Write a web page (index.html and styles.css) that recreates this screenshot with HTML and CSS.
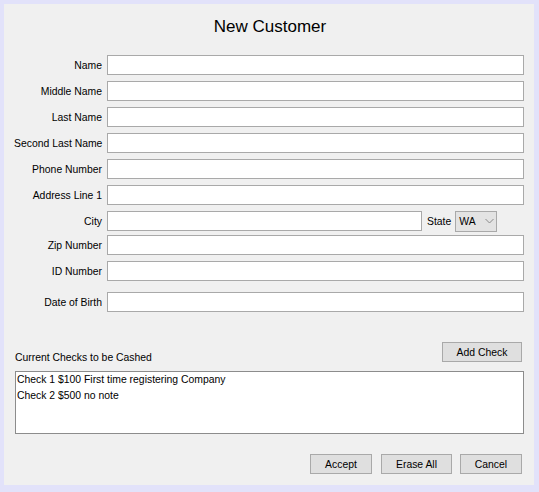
FILE: index.html
```html
<!DOCTYPE html>
<html>
<head>
<meta charset="utf-8">
<link rel="stylesheet" href="styles.css">
</head>
<body>
<div class="panel">
  <div class="title">New Customer</div>
  <div class="form">
    <div class="row"><label class="lbl">Name</label><div class="field"></div></div>
    <div class="row"><label class="lbl">Middle Name</label><div class="field"></div></div>
    <div class="row"><label class="lbl">Last Name</label><div class="field"></div></div>
    <div class="row"><label class="lbl">Second Last Name</label><div class="field"></div></div>
    <div class="row"><label class="lbl">Phone Number</label><div class="field"></div></div>
    <div class="row"><label class="lbl">Address Line 1</label><div class="field"></div></div>
    <div class="row">
      <label class="lbl">City</label>
      <div class="field city"></div>
      <span class="state-lbl">State</span>
      <div class="combo"><span>WA</span><svg class="chev" width="9" height="6" viewBox="0 0 9 6"><polyline points="0.5,1 4.5,5 8.5,1" fill="none" stroke="#8a8a8a" stroke-width="1"/></svg></div>
    </div>
    <div class="row row-zip"><label class="lbl">Zip Number</label><div class="field"></div></div>
    <div class="row"><label class="lbl">ID Number</label><div class="field"></div></div>
    <div class="row row-dob"><label class="lbl">Date of Birth</label><div class="field"></div></div>
  </div>
  <div class="checks-head">
    <span class="checks-lbl">Current Checks to be Cashed</span>
    <button class="btn btn-add">Add Check</button>
  </div>
  <div class="list">
    <div class="item">Check 1 $100 First time registering Company</div>
    <div class="item">Check 2 $500 no note</div>
  </div>
  <div class="actions">
    <button class="btn btn-accept">Accept</button>
    <button class="btn btn-erase">Erase All</button>
    <button class="btn btn-cancel">Cancel</button>
  </div>
</div>
</body>
</html>
```
FILE: styles.css
```css
html, body {
  margin: 0;
  padding: 0;
}
body {
  background: #e2e2fa;
  width: 539px;
  height: 492px;
  font-family: "Liberation Sans", Arial, sans-serif;
  font-size: 10.4px;
  color: #000;
}
.panel {
  margin: 4px 5px 0 4px;
  height: 481px;
  background: #f0f0f0;
  padding: 0 10px 0 10px;
  box-sizing: border-box;
  display: flex;
  flex-direction: column;
}
.title {
  font-size: 17px;
  line-height: 20px;
  text-align: center;
  margin-top: 13px;
  height: 20px;
  padding-left: 2px;
}
.form {
  margin-top: 18px;
  display: flex;
  flex-direction: column;
  gap: 6px;
}
.row {
  display: flex;
  align-items: center;
  height: 20px;
}
.row-zip { margin-top: -2px; }
.row-dob { margin-top: 5px; }
.lbl {
  width: 88px;
  text-align: right;
  margin-right: 5px;
  white-space: nowrap;
}
.field {
  flex: 1;
  height: 20px;
  box-sizing: border-box;
  background: #fff;
  border: 1px solid #a9a9a9;
}
.field.city {
  flex: 0 0 315px;
}
.state-lbl {
  margin-left: 5px;
  margin-right: 4px;
}
.combo {
  width: 42px;
  height: 21px;
  box-sizing: border-box;
  background: #e3e3e3;
  border: 1px solid #a9a9a9;
  display: flex;
  align-items: center;
  padding-left: 3px;
}
.chev {
  margin-left: 9px;
}
.checks-head {
  margin-top: 30px;
  display: flex;
  justify-content: space-between;
  align-items: flex-end;
  height: 20px;
  padding-right: 2px;
}
.checks-lbl {
  margin-left: 1px;
  margin-bottom: -1px;
}
.btn {
  font-family: "Liberation Sans", Arial, sans-serif;
  font-size: 10.4px;
  color: #000;
  height: 20px;
  box-sizing: border-box;
  background: #dfdfdf;
  border: 1px solid #a9a9a9;
  border-radius: 0;
  padding: 0;
  margin: 0;
}
.btn-add { width: 80px; }
.list {
  margin-top: 9px;
  margin-left: 1px;
  height: 63px;
  box-sizing: border-box;
  background: #fff;
  border: 1px solid #8c8c8c;
  padding: 0 1px;
}
.item {
  height: 16px;
  line-height: 16px;
}
.actions {
  margin-top: 20px;
  display: flex;
  justify-content: flex-end;
  gap: 9px;
  padding-right: 2px;
}
.btn-accept { width: 62px; }
.btn-erase { width: 71px; }
.btn-cancel { width: 62px; margin-left: -1px; }
```
